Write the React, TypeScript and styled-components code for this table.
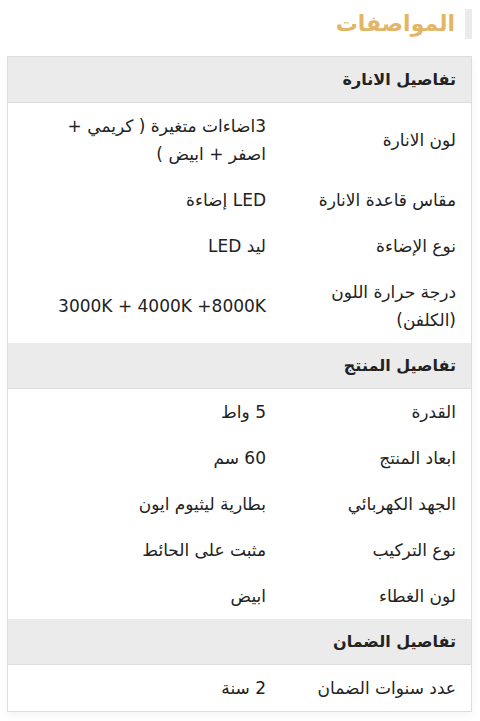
import styled, { createGlobalStyle } from 'styled-components';

const GlobalStyle = createGlobalStyle`
	html, body {
		margin: 0;
		padding: 0;
		background: #ffffff;
	}
	body {
		font-family: 'DejaVu Sans', 'Noto Sans', sans-serif;
		color: #222222;
	}
`;

const Page = styled.div`
	direction: rtl;
	padding: 9px 8px 10px 7px;
`;

const TitleRow = styled.div`
	display: flex;
	align-items: center;
	gap: 10px;
	height: 30px;
	margin-bottom: 17px;
`;

const TitleMark = styled.span`
	width: 7px;
	height: 30px;
	background: #ebebeb;
`;

const Title = styled.h2`
	margin: 0;
	font-size: 22px;
	font-weight: 700;
	color: #e3b566;
	line-height: 30px;
`;

const Table = styled.div`
	border: 1px solid #dddddd;
	box-shadow: 0 4px 8px rgba(0, 0, 0, 0.04);
`;

const GroupHeader = styled.div`
	background: #ebebeb;
	border-bottom: 1px solid #dddddd;
	padding: 0 15px;
	height: 45px;
	display: flex;
	align-items: center;
	font-size: 16px;
	font-weight: 700;
	color: #222222;
`;

const Row = styled.div`
	display: grid;
	grid-template-columns: 189px 1fr;
	padding: 9px 0;
	font-size: 17px;
	line-height: 28px;
`;

const Label = styled.div`
	padding: 0 15px;
	align-self: center;
`;

const Value = styled.div`
	padding: 0 16px 0 30px;
	align-self: center;
`;

type Spec = { label: string; value: string };
type Group = { title: string; rows: Spec[] };

const groups: Group[] = [
	{
		title: 'تفاصيل الانارة',
		rows: [
			{ label: 'لون الانارة', value: '3اضاءات متغيرة ( كريمي + اصفر + ابيض )' },
			{ label: 'مقاس قاعدة الانارة', value: 'LED إضاءة' },
			{ label: 'نوع الإضاءة', value: 'ليد LED' },
			{ label: 'درجة حرارة اللون (الكلفن)', value: '3000K + 4000K +8000K' },
		],
	},
	{
		title: 'تفاصيل المنتج',
		rows: [
			{ label: 'القدرة', value: '5 واط' },
			{ label: 'ابعاد المنتج', value: '60 سم' },
			{ label: 'الجهد الكهربائي', value: 'بطارية ليثيوم ايون' },
			{ label: 'نوع التركيب', value: 'مثبت على الحائط' },
			{ label: 'لون الغطاء', value: 'ابيض' },
		],
	},
	{
		title: 'تفاصيل الضمان',
		rows: [{ label: 'عدد سنوات الضمان', value: '2 سنة' }],
	},
];

function App(): JSX.Element {
	return (
		<Page>
			<GlobalStyle />
			<TitleRow>
				<TitleMark />
				<Title>المواصفات</Title>
			</TitleRow>
			<Table>
				{groups.map((g) => (
					<div key={g.title}>
						<GroupHeader>{g.title}</GroupHeader>
						{g.rows.map((r) => (
							<Row key={r.label}>
								<Label>{r.label}</Label>
								<Value>{r.value}</Value>
							</Row>
						))}
					</div>
				))}
			</Table>
		</Page>
	);
}

export default App;
